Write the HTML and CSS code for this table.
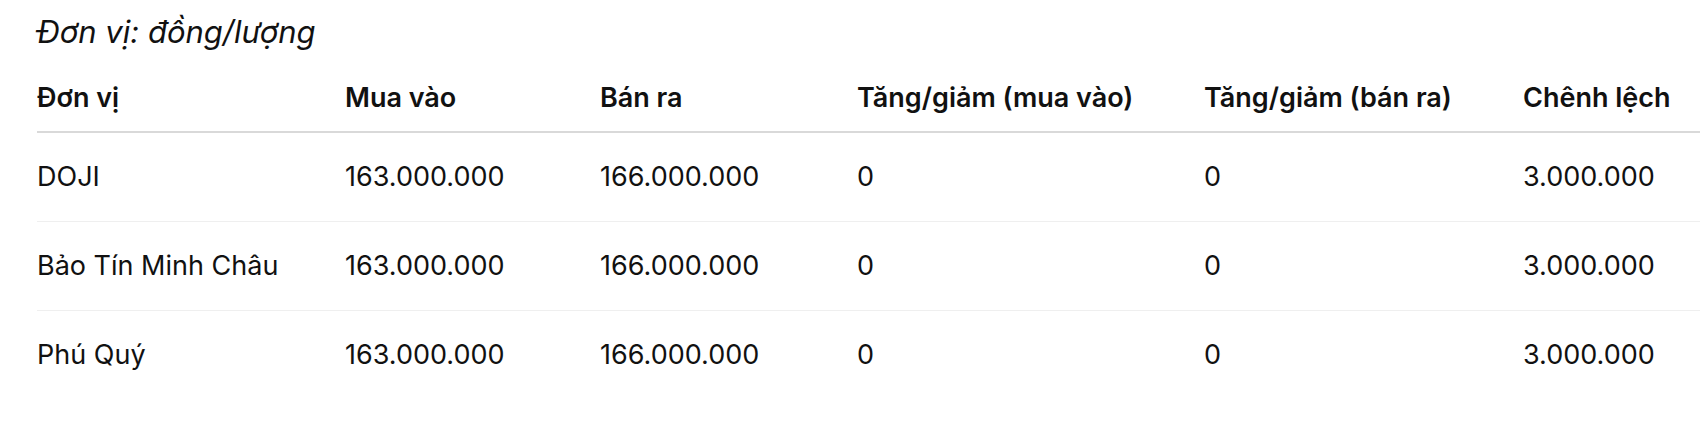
FILE: index.html
```html
<!DOCTYPE html>
<html lang="vi">
<head>
<meta charset="utf-8">
<title>Giá vàng</title>
<link rel="stylesheet" href="styles.css">
</head>
<body>
<div class="page">
  <p class="unit">Đơn vị: đồng/lượng</p>
  <table class="prices">
    <colgroup>
      <col class="c1"><col class="c2"><col class="c3"><col class="c4"><col class="c5"><col class="c6">
    </colgroup>
    <thead>
      <tr>
        <th>Đơn vị</th>
        <th>Mua vào</th>
        <th>Bán ra</th>
        <th>Tăng/giảm (mua vào)</th>
        <th>Tăng/giảm (bán ra)</th>
        <th>Chênh lệch</th>
      </tr>
    </thead>
    <tbody>
      <tr>
        <td>DOJI</td><td>163.000.000</td><td>166.000.000</td><td>0</td><td>0</td><td>3.000.000</td>
      </tr>
      <tr>
        <td>Bảo Tín Minh Châu</td><td>163.000.000</td><td>166.000.000</td><td>0</td><td>0</td><td>3.000.000</td>
      </tr>
      <tr>
        <td>Phú Quý</td><td>163.000.000</td><td>166.000.000</td><td>0</td><td>0</td><td>3.000.000</td>
      </tr>
    </tbody>
  </table>
</div>
</body>
</html>
```

FILE: styles.css
```css
html, body {
  margin: 0;
  padding: 0;
  background: #ffffff;
}

.page {
  padding: 13px 0 0 37px;
  font-family: Inter, "Noto Sans", "Liberation Sans", sans-serif;
  color: #111111;
}

.unit {
  margin: 0;
  font-size: 31px;
  line-height: 37px;
  font-style: italic;
  font-weight: 400;
}

.prices {
  width: 1663px;
  border-collapse: collapse;
  table-layout: fixed;
  margin-top: 33px;
  font-size: 27px;
}

.c1 { width: 308px; }
.c2 { width: 255px; }
.c3 { width: 257px; }
.c4 { width: 347px; }
.c5 { width: 319px; }
.c6 { width: 177px; }

.prices th {
  text-align: left;
  font-weight: 600;
  padding: 0 0 18px 0;
  line-height: 30px;
  vertical-align: top;
  border-bottom: 2px solid #d9d9d9;
  white-space: nowrap;
}

.prices td {
  padding: 0;
  height: 88px;
  line-height: 30px;
  vertical-align: middle;
  border-bottom: 1px solid #efefef;
  white-space: nowrap;
}

.prices tbody tr:last-child td {
  border-bottom: none;
}
```
